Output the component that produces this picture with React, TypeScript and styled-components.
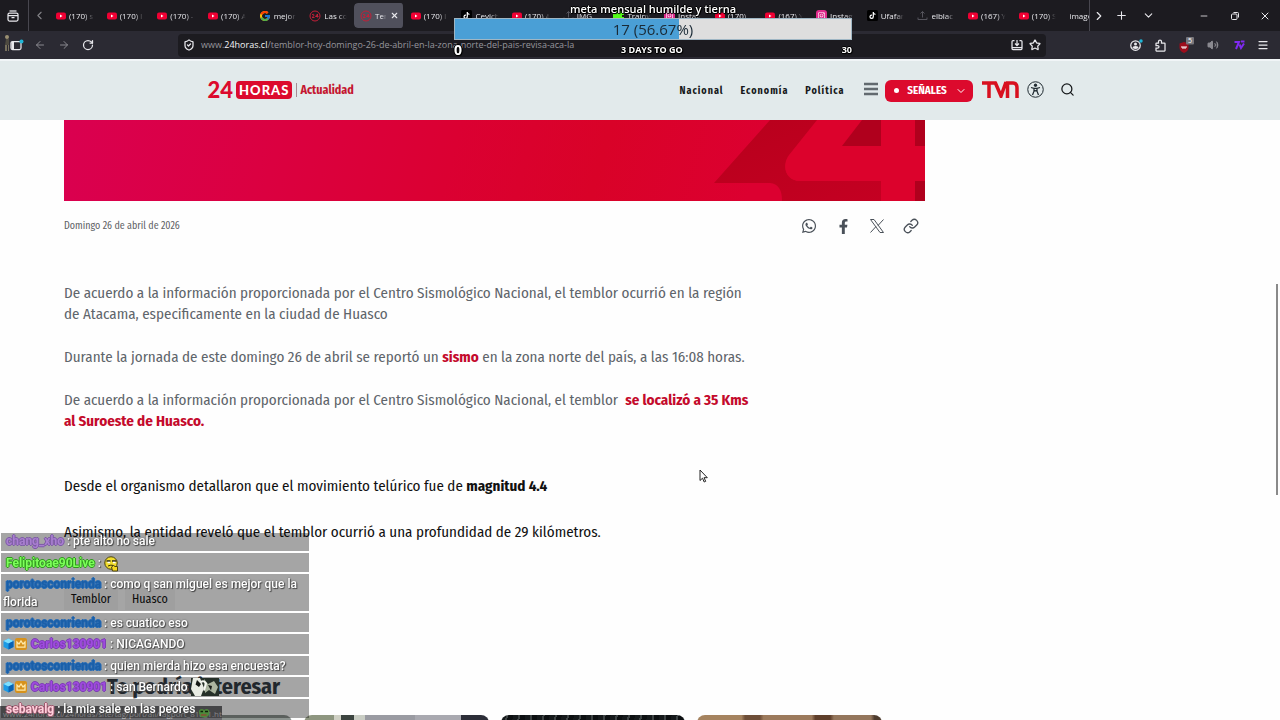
import React from "react";
import styled, { createGlobalStyle, css } from "styled-components";
import {
  ArrowLeft, ArrowRight, ChevronDown, ChevronLeft, ChevronRight, Link, Menu, Minus,
  Plus, RotateCw, Search, ShieldCheck, Star, Volume2, X,
} from "lucide-react";
import { FaFacebookF, FaInstagram, FaTiktok, FaWhatsapp } from "react-icons/fa";
import { FcGoogle } from "react-icons/fc";

const body = `"Fira Sans Condensed", "Fira Sans", Roboto, sans-serif`;
const ui = `"Open Sans", "Noto Sans", sans-serif`;
const red = "#dc0a2d";

const Global = createGlobalStyle`
  * { box-sizing: border-box; }
  body { margin: 0; background: #fefefe; font-family: ${body}; }
  p, h2, ul { margin: 0; padding: 0; }
  ul { list-style: none; }
  button { border: 0; padding: 0; background: none; font: inherit; color: inherit; }
  a { color: inherit; text-decoration: none; }
  svg { display: block; flex: none; }
`;

const Screen = styled.div`
  height: 100vh;
  overflow: hidden;
  display: flex;
  flex-direction: column;
`;

/* Browser chrome */
const TabStrip = styled.div`
  flex: none;
  height: 31px;
  display: flex;
  align-items: center;
  background: #1c1b20;
  color: #e8e8ec;
`;
const ChromeButton = styled.button<{ $w: number; $dim?: boolean }>`
  width: ${(p) => p.$w}px;
  height: 100%;
  flex: none;
  display: flex;
  align-items: center;
  justify-content: center;
  opacity: ${(p) => (p.$dim ? 0.5 : 1)};
`;
const Pinned = styled.div`
  width: 29px;
  height: 100%;
  display: flex;
  border-right: 1px solid #48474f;
`;
const Tabs = styled.div`
  flex: 1;
  min-width: 0;
  height: 100%;
  display: flex;
  align-items: center;
  overflow: hidden;
  border-right: 1px solid #48474f;
`;
const Tab = styled.button<{ $active?: boolean }>`
  flex: 0 0 calc(100% / 20.5);
  min-width: 0;
  height: 25px;
  padding: 0 4px 0 6px;
  display: flex;
  align-items: center;
  gap: 3px;
  border-radius: 4px;
  background: ${(p) => (p.$active ? "#50505c" : "none")};
  background-clip: padding-box;
  border-right: 2px solid transparent;
`;
const TabLabel = styled.span`
  flex: 1;
  min-width: 0;
  overflow: hidden;
  white-space: nowrap;
  text-align: left;
  font: 8px/12px ${ui};
  mask-image: linear-gradient(90deg, #000 60%, transparent 95%);
`;
const Toolbar = styled.div`
  flex: none;
  height: 28px;
  display: flex;
  align-items: center;
  background: #2b2a33;
  color: #e8e8ec;
`;
const NavButtons = styled.div`
  flex: none;
  width: 178px;
  height: 100%;
  display: flex;
  padding-left: 4px;
`;
const UrlBar = styled.div`
  flex: 1;
  height: 23px;
  padding: 0 5px;
  display: flex;
  align-items: center;
  gap: 6px;
  border-radius: 4px;
  background: #1c1b20;
`;
const Url = styled.div`
  flex: 1;
  font: 9px/14px ${ui};
  color: #96959c;
  b { font-weight: 400; color: #f4f4f6; }
`;
const Extensions = styled.div`
  flex: none;
  width: 234px;
  height: 100%;
  padding-left: 77px;
  display: flex;
`;
const Spacer = styled.span<{ $w: number }>`
  flex: none;
  width: ${(p) => p.$w}px;
`;

/* Site header */
const Header = styled.header`
  flex: none;
  height: 61px;
  background: #e2eaeb;
  border-top: 2px solid #f1f5f7;
  padding: 0 24px 0 26px;
`;
const HeaderInner = styled.div`
  max-width: 867px;
  height: 100%;
  margin: 0 auto;
  display: flex;
  align-items: center;
  justify-content: space-between;
`;
const Brand = styled.a`
  display: flex;
  align-items: center;
  margin-bottom: 2px;
  color: ${red};
`;
const BrandNumber = styled.span`
  font: 900 22px/18px Lato, sans-serif;
  margin-right: 3px;
`;
const BrandBadge = styled.span`
  height: 18px;
  padding: 0 3px;
  border-radius: 4px;
  background: ${red};
  color: #fff;
  font: 900 13px/18px Lato, sans-serif;
  letter-spacing: 1px;
`;
const Section = styled.span`
  margin-left: 4px;
  padding-left: 3px;
  border-left: 1px solid #a58c94;
  font: 700 12px/14px ${body};
  color: #c4162f;
`;
const Nav = styled.nav`
  display: flex;
  align-items: center;
  gap: 17px;
  font: 700 10px/16px ${body};
  letter-spacing: 1px;
  color: #15181a;
`;
const Tools = styled.div`
  display: flex;
  align-items: center;
  margin: 0 0 3px 2px;
  letter-spacing: 0;
`;
const Signals = styled.button`
  width: 88px;
  height: 22px;
  margin: 3px 9px 0 7px;
  padding: 0 5px 0 9px;
  display: flex;
  align-items: center;
  justify-content: space-between;
  border-radius: 6px;
  background: ${red};
  color: #fff;
  font: 700 11px/22px ${body};
`;
const Dot = styled.i`
  width: 5px;
  height: 5px;
  border-radius: 50%;
  background: #fff;
`;
const IconButton = styled.button<{ $left?: number }>`
  display: flex;
  margin-left: ${(p) => p.$left ?? 0}px;
`;

/* Article */
const Article = styled.main`
  flex: none;
  max-width: 925px;
  padding-left: 64px;
`;
const Hero = styled.div`
  height: 81px;
  display: flex;
  justify-content: flex-end;
  overflow: hidden;
  background: linear-gradient(105deg, #da0050 0%, #db0040 25%, #db0032 45%, #d90228 62%, #dc0030 80%);
`;
const Meta = styled.div`
  height: 50px;
  padding-right: 5px;
  display: flex;
  align-items: center;
  justify-content: space-between;
  color: #5e6266;
  font-size: 10px;
`;
const Share = styled.div`
  display: flex;
  align-items: center;
  gap: 16px;
  color: #4a5159;
`;
const ShareButton = styled.button`
  width: 18px;
  height: 18px;
  display: flex;
  align-items: center;
  justify-content: center;
`;
const Story = styled.div`
  max-width: 688px;
  padding-top: 32px;
  font-size: 15px;
  line-height: 21px;
  color: #5f656b;
`;
const Para = styled.p<{ $dark?: boolean; $top?: number }>`
  margin-top: ${(p) => p.$top ?? 22}px;
  &:first-child { margin-top: 0; }
  ${(p) => p.$dark && css`color: #111;`}
  a { color: #c40a2c; font-weight: 700; }
`;
const Tags = styled.div`
  margin-top: 45px;
  display: flex;
  gap: 7px;
`;
const Tag = styled.a`
  padding: 0 7px;
  background: #f4f4f4;
  font-size: 12px;
  line-height: 22px;
  color: #111;
`;
const Related = styled.section`
  margin-top: 65px;
  padding: 0 43px;
`;
const RelatedTitle = styled.h2`
  font: 700 22px/24px ${body};
  color: #343c46;
`;
const Cards = styled.div`
  margin-top: 16px;
  display: grid;
  grid-template-columns: repeat(4, 1fr);
  gap: 12px;
`;
const Card = styled.a<{ $bg: string }>`
  height: 104px;
  border-radius: 8px;
  overflow: hidden;
  background: ${(p) => p.$bg};
`;

/* Layers over the page */
const ScrollThumb = styled.div`
  position: fixed;
  right: 2px;
  top: 284px;
  width: 2px;
  height: 211px;
  background: #8a8a8a;
`;
const Pointer = styled.svg`
  position: fixed;
  left: 699px;
  top: 469px;
`;
const StatusBar = styled.div`
  position: fixed;
  left: 0;
  bottom: 0;
  width: 222px;
  height: 14px;
  padding-left: 3px;
  overflow: hidden;
  white-space: nowrap;
  background: #6a6a6e;
  color: #c9c9cc;
  font: 8px/15px ${ui};
`;
const Goal = styled.div`
  position: fixed;
  top: 0;
  left: calc(50% + 13px);
  width: 398px;
  transform: translateX(-50%);
  font-family: ${ui};
  color: #fff;
  text-align: center;
`;
const outline = css`
  text-shadow: 1px 0 #000, -1px 0 #000, 0 1px #000, 0 -1px #000, 1px 1px 1px #000;
`;
const GoalTitle = styled.div`
  height: 18px;
  font-size: 11px;
  font-weight: 600;
  line-height: 18px;
  ${outline}
`;
const GoalBar = styled.div`
  height: 22px;
  background: linear-gradient(90deg, #4a9fd6 56.67%, #dedede 56.67%);
  border: 1px solid #9fb6c4;
  color: #1a2a36;
  font-size: 15px;
  line-height: 20px;
`;
const GoalFoot = styled.div`
  height: 18px;
  display: flex;
  align-items: center;
  justify-content: space-between;
  font-size: 9px;
  font-weight: 700;
  ${outline}
  span:first-child { font-size: 14px; }
`;
const Chat = styled.ul`
  position: fixed;
  left: 1px;
  bottom: 2px;
  width: 308px;
  height: 185px;
  display: flex;
  flex-direction: column;
  justify-content: flex-end;
  gap: 2px;
  overflow: hidden;
  font: 500 12px/18px Roboto, sans-serif;
`;
const Message = styled.li<{ $cut?: boolean }>`
  flex: 0 1 auto;
  min-height: 0;
  ${(p) => p.$cut && css`height: 18px; display: flex; align-items: flex-end; white-space: pre;`}
  padding: 1px 2px;
  background: rgba(0, 0, 0, 0.35);
  color: #fff;
  text-shadow: 1px 1px 1px #444, 0 0 2px #555;
  svg { display: inline-block; vertical-align: -2px; margin-right: 1px; }
  svg:last-child { vertical-align: -5px; }
`;
const User = styled.b<{ $c: string; $edge: string }>`
  margin: 0 3px;
  font-weight: 700;
  color: ${(p) => p.$c};
  text-shadow: 1px 0 ${(p) => p.$edge}, -1px 0 ${(p) => p.$edge}, 0 1px ${(p) => p.$edge}, 0 -1px ${(p) => p.$edge};
`;

const YouTube = () => (
  <svg width="10" height="8" viewBox="0 0 20 16"><rect y="1" width="20" height="14" rx="4" fill="#f00033" /><path d="M8 5l5 3-5 3z" fill="#fff" /></svg>
);
const Tik = () => (
  <svg width="11" height="11" viewBox="0 0 22 22"><rect width="22" height="22" rx="3" fill="#000" /><FaTiktok x={4} y={4} size={14} color="#fff" /></svg>
);
const Insta = () => (
  <svg width="11" height="11" viewBox="0 0 22 22"><rect width="22" height="22" rx="6" fill="#e02a8c" /><path d="M0 16l10 6H6a6 6 0 0 1-6-6z" fill="#ff9a30" /><FaInstagram x={3} y={3} size={16} color="#fff" /></svg>
);
const News = () => (
  <svg width="12" height="12" viewBox="0 0 24 24" fill="none" stroke="#c21f38" strokeWidth="2">
    <circle cx="12" cy="12" r="10" /><path d="M6 9.500q3-2 4 0t-4 5.500h5M17 15V8l-4 5h6" />
  </svg>
);
const Kick = () => <svg width="11" height="11" viewBox="0 0 11 11"><path fill="#53fc18" d="M0 0h4v3h2V1h5v4H9v2h2v4H6V9H4v2H0z" /></svg>;
const Faint = () => (
  <svg width="11" height="11" viewBox="0 0 22 22" fill="none" stroke="#55545c" strokeWidth="2"><path d="M11 15V3M7 7l4-4 4 4M2 15v4h18v-4" /></svg>
);

const tabs: [React.ReactNode, string][] = [
  [<YouTube />, "(170) s"], [<YouTube />, "(170) l"], [<YouTube />, "(170) -"], [<YouTube />, "(170) A"],
  [<FcGoogle size={12} />, "mejor"], [<News />, "Las co"], [<News />, "Tem"], [<YouTube />, "(170) l"],
  [<Tik />, "Cevich"], [<YouTube />, "(170) A"], [<Faint />, "IMG_"], [<Kick />, "Trainw"],
  [<Insta />, "Instag"], [<YouTube />, "(170)"], [<YouTube />, "(167) Y"], [<Insta />, "Instag"],
  [<Tik />, "Ufafar"], [<Faint />, "elblac"], [<YouTube />, "(167) Y"], [<YouTube />, "(170) S"], [null, "image"],
];

const Badges = () => (
  <>
    <svg width="11" height="12" viewBox="0 0 22 24"><path d="M11 1l10 5v12l-10 5L1 18V6z" fill="#1c9be6" /><path d="M11 1l10 5-10 5L1 6z" fill="#7fe0ff" /><path d="M11 11l10-5v12l-10 5z" fill="#0a62b4" /></svg>
    <svg width="12" height="12" viewBox="0 0 24 24"><rect width="24" height="24" rx="4" fill="#d7921c" /><path d="M4 18V8l4 4 4-6 4 6 4-4v10z" fill="none" stroke="#ffe9a8" strokeWidth="2.500" /></svg>
  </>
);
const Smirk = () => (
  <svg width="15" height="16" viewBox="0 0 30 32">
    <circle cx="14" cy="14" r="12.500" fill="#f0dc2c" stroke="#4a4210" strokeWidth="2" />
    <path d="M5 10h8M16 10h9" stroke="#222" strokeWidth="3" /><path d="M7 13h5M18 13h5" stroke="#fff" strokeWidth="3" />
    <path d="M8 20q6-3 11-1" fill="none" stroke="#332b08" strokeWidth="2" />
    <path d="M15 22l4-3 3 2h5v9H17z" fill="#f5d820" stroke="#4a4210" strokeWidth="2" />
  </svg>
);
const Cow = () => (
  <svg width="28" height="18" viewBox="0 0 56 36">
    <rect width="56" height="36" fill="#263029" /><path d="M4 0h14l8 20-6 16H8L0 22z" fill="#e9ece4" />
    <path d="M26 2l8 10 12-6 8 12-6 14-12-8-8 6z" fill="#aab49f" /><path d="M12 4l8 8-4 6-7-5zM34 14l8 2-2 9z" fill="#161a17" />
    <path d="M20 8q6-4 10 3l-4 14" fill="none" stroke="#f6f7f2" strokeWidth="4" />
  </svg>
);
const Frog = () => (
  <svg width="12" height="10" viewBox="0 0 24 20"><path d="M2 8q0-6 6-6 4 0 4 3 1-3 5-3 6 0 6 7-1 10-11 10T2 8z" fill="#4d8a3a" /><path d="M5 7h5M14 7h6" stroke="#10210c" strokeWidth="3" /><path d="M6 14h11" stroke="#8c4a36" strokeWidth="3" /></svg>
);
const Mascot = () => (
  <svg width="6" height="22" viewBox="0 0 6 22"><circle cx="3" cy="6" r="2" fill="#9a8f72" /><path d="M2 8h3v6H1z" fill="#4e4a40" /><path d="M1 14h2v6H1zM4 14h1v6H4z" fill="#77705c" /></svg>
);
const Arts = () => (
  <svg width="285" height="81" viewBox="640 120 285 81" preserveAspectRatio="xMaxYMin slice">
    <defs>
      <linearGradient id="shade" x1="0" x2="1" y1="0" y2="1"><stop offset="0" stopColor="#b8001c" /><stop offset="1" stopColor="#c40022" /></linearGradient>
    </defs>
    <path d="M770 120L714 183h56q12 1 12 18h99v-20h-81c-14 0-19-16-10-26l29-35z" fill="url(#shade)" />
    <path d="M817 120l-28 35c-8 11-3 26 11 26h81v20h34v-20h10v-35h-10v-26h-34v26h-39l20-26z" fill="#dc022c" />
    <path d="M862 120l-20 26h39v-26zM915 120h10v26h-10zM915 181h10v20h-10z" fill="#b0001d" />
  </svg>
);

export default function App() {
  return (
    <Screen>
      <Global />
      <TabStrip>
        <Pinned>
          <ChromeButton $w={26} aria-label="Recent browsing">
            <svg width="12" height="12" viewBox="0 0 24 24" fill="none" stroke="currentColor" strokeWidth="2.500"><path d="M5 2h14" /><rect x="2" y="6" width="20" height="16" rx="3" /><path d="M2 11h20M9 15h6" /></svg>
          </ChromeButton>
        </Pinned>
        <ChromeButton $w={21} $dim aria-label="Scroll left"><ChevronLeft size={13} /></ChromeButton>
        <Tabs>
          {tabs.map(([icon, label], i) => (
            <Tab key={i} $active={i === 6}>
              {icon}
              <TabLabel>{label}</TabLabel>
              {i === 6 && <X size={9} strokeWidth={3} />}
            </Tab>
          ))}
        </Tabs>
        <ChromeButton $w={18} aria-label="Scroll right"><ChevronRight size={14} /></ChromeButton>
        <ChromeButton $w={27} aria-label="New tab"><Plus size={13} /></ChromeButton>
        <ChromeButton $w={27} aria-label="List tabs"><ChevronDown size={13} /></ChromeButton>
        <Spacer $w={34} />
        <ChromeButton $w={15} aria-label="Minimize"><Minus size={10} /></ChromeButton>
        <ChromeButton $w={47} aria-label="Restore">
          <svg width="8" height="8" viewBox="0 0 16 16" fill="none" stroke="currentColor" strokeWidth="2"><rect x="1" y="4" width="11" height="11" rx="2" /><path d="M5 1h8q2 0 2 2v8" /></svg>
        </ChromeButton>
        <ChromeButton $w={13} aria-label="Close"><X size={12} /></ChromeButton>
        <Spacer $w={9} />
      </TabStrip>
      <Toolbar>
        <NavButtons>
          <Mascot />
          <ChromeButton $w={14} aria-label="Sidebar">
            <svg width="14" height="12" viewBox="0 0 28 24"><rect x="2" y="5" width="20" height="16" rx="3" fill="none" stroke="#e8e8ec" strokeWidth="2.500" /><path d="M3 6h5v14H3z" fill="#e8e8ec" /><circle cx="23" cy="5" r="4" fill="#1fb6d8" /></svg>
          </ChromeButton>
          <Spacer $w={4} />
          <ChromeButton $w={24} $dim aria-label="Back"><ArrowLeft size={12} /></ChromeButton>
          <ChromeButton $w={24} $dim aria-label="Forward"><ArrowRight size={12} /></ChromeButton>
          <ChromeButton $w={24} aria-label="Reload"><RotateCw size={12} strokeWidth={2.500} /></ChromeButton>
        </NavButtons>
        <UrlBar>
          <ShieldCheck size={12} strokeWidth={2.500} />
          <Url>www.<b>24horas.cl</b>/temblor-hoy-domingo-26-de-abril-en-la-zona-norte-del-pais-revisa-aca-la</Url>
          <svg width="12" height="12" viewBox="0 0 24 24" fill="none" stroke="currentColor" strokeWidth="2.500"><path d="M7 3H4q-2 0-2 2v14q0 2 2 2h16q2 0 2-2V5q0-2-2-2h-3M2 17h20M12 2v10M8 9l4 4 4-4" /></svg>
          <Star size={12} strokeWidth={2.500} />
        </UrlBar>
        <Extensions>
          <ChromeButton $w={26} aria-label="Account">
            <svg width="13" height="12" viewBox="0 0 26 24"><circle cx="11" cy="13" r="9.500" fill="none" stroke="#e8e8ec" strokeWidth="2.500" /><circle cx="11" cy="10" r="3" fill="#e8e8ec" /><path d="M5 18q0-4 6-4t6 4q-6 4-12 0z" fill="#e8e8ec" /><circle cx="22" cy="4" r="3.500" fill="#1fb6d8" /></svg>
          </ChromeButton>
          <ChromeButton $w={23} aria-label="Extensions">
            <svg width="11" height="13" viewBox="0 0 22 26" fill="none" stroke="currentColor" strokeWidth="2.500"><path d="M7 8V5q0-3 3-3t3 3v3h6q1 0 1 1v14q0 1-1 1H3q-1 0-1-1v-5h3q3 0 3-2.500T5 13H2V9q0-1 1-1z" /></svg>
          </ChromeButton>
          <ChromeButton $w={28} aria-label="Blocker">
            <svg width="16" height="18" viewBox="0 0 32 36"><path d="M12 12l9 3v8q0 7-9 11-9-4-9-11v-8z" fill="#9c0d1c" /><path d="M8 20v4h4v-4M12 24h4v-4" fill="none" stroke="#fff" strokeWidth="2" /><rect x="16" y="2" width="16" height="15" rx="2" fill="#77767c" /><text x="20" y="14" fontSize="14" fill="#fff" fontFamily="Open Sans">5</text></svg>
          </ChromeButton>
          <ChromeButton $w={26} $dim aria-label="Volume"><Volume2 size={12} fill="currentColor" /></ChromeButton>
          <ChromeButton $w={26} aria-label="7TV">
            <svg width="11" height="10" viewBox="0 0 22 20" fill="none" stroke="#7f2af0" strokeWidth="4"><path d="M1 4h9L4 18M11 9l3 7 6-9M14 3h7" /></svg>
          </ChromeButton>
          <ChromeButton $w={22} aria-label="Menu"><Menu size={12} strokeWidth={2.500} /></ChromeButton>
        </Extensions>
      </Toolbar>

      <Header>
        <HeaderInner>
          <Brand href="#">
            <BrandNumber>24</BrandNumber>
            <BrandBadge>HORAS</BrandBadge>
            <Section>Actualidad</Section>
          </Brand>
          <Nav>
            <a href="#nacional">Nacional</a>
            <a href="#economia">Economía</a>
            <a href="#politica">Política</a>
            <Tools>
              <IconButton aria-label="Menú">
                <svg width="14" height="14" viewBox="0 0 14 14" stroke="#626a6f" strokeWidth="2.500"><path d="M0 2h14M0 7h14M0 12h14" /></svg>
              </IconButton>
              <Signals><Dot />SEÑALES<ChevronDown size={12} /></Signals>
              <svg width="37" height="17" viewBox="0 0 37 17" fill="none" stroke="#d8101f" strokeWidth="3.500"><path d="M0 2h14M7 2v15M13 1l6 14 5-14M25.500 17V2H31q4 0 4 5v10" /></svg>
              <IconButton $left={8} aria-label="Accesibilidad">
                <svg width="17" height="17" viewBox="0 0 34 34" fill="none" stroke="#1f2a30" strokeWidth="2"><circle cx="17" cy="17" r="15.500" /><circle cx="17" cy="8.500" r="2.500" fill="#1f2a30" /><path d="M8 13l6 1.500h6L26 13M14 14.500v6L11 28M20 14.500v6L23 28M14 20.500l3-1 3 1" strokeWidth="2.500" /></svg>
              </IconButton>
              <IconButton $left={16} aria-label="Buscar"><Search size={15} /></IconButton>
            </Tools>
          </Nav>
        </HeaderInner>
      </Header>

      <Article>
        <Hero><Arts /></Hero>
        <Meta>
          <span>Domingo 26 de abril de 2026</span>
          <Share>
            <ShareButton aria-label="WhatsApp"><FaWhatsapp size={16} /></ShareButton>
            <ShareButton aria-label="Facebook"><FaFacebookF size={15} /></ShareButton>
            <ShareButton aria-label="X">
              <svg width="16" height="16" viewBox="0 0 32 32" fill="none" stroke="currentColor" strokeWidth="2"><path d="M3 3h7l19 26h-7zM29 3L18 15M3 29l11-12" /></svg>
            </ShareButton>
            <ShareButton aria-label="Copiar enlace"><Link size={16} /></ShareButton>
          </Share>
        </Meta>
        <Story>
          <Para>De acuerdo a la información proporcionada por el Centro Sismológico Nacional, el temblor ocurrió en la región de Atacama, especificamente en la ciudad de Huasco</Para>
          <Para>Durante la jornada de este domingo 26 de abril se reportó un <a href="#sismo">sismo</a> en la zona norte del país, a las 16:08 horas.</Para>
          <Para>De acuerdo a la información proporcionada por el Centro Sismológico Nacional, el temblor&nbsp; <a href="#huasco">se localizó a 35 Kms al Suroeste de Huasco.</a></Para>
          <Para $dark $top={44}>Desde el organismo detallaron que el movimiento telúrico fue de <b>magnitud 4.4</b></Para>
          <Para $dark $top={25}>Asimismo, la entidad reveló que el temblor ocurrió a una profundidad de 29 kilómetros.</Para>
        </Story>
        <Tags><Tag href="#temblor">Temblor</Tag><Tag href="#ciudad">Huasco</Tag></Tags>
        <Related>
          <RelatedTitle>Te podría interesar</RelatedTitle>
          <Cards>
            <Card href="#1" $bg="#8d9490" />
            <Card href="#2" $bg="linear-gradient(90deg, #8e9680 0 16%, #cfd0c4 16% 20%, #3c4440 20% 27%, #c9cdc4 27% 33%, #9a9ba2 33% 60%, #a9a9b0 60% 85%, #2c2e38 85%)" />
            <Card href="#3" $bg="repeating-linear-gradient(100deg, #15191b 0 5px, #3c4243 5px 7px, #0c0f11 7px 12px)" />
            <Card href="#4" $bg="linear-gradient(90deg, #a5835f 0 24%, #6e4e38 26% 34%, #9c7a5c 36% 62%, #5f3f2b 64% 72%, #94765c 74% 94%, #4e3c2e 96%)" />
          </Cards>
        </Related>
      </Article>

      <ScrollThumb />
      <Pointer width="9" height="14" viewBox="0 0 9 14"><path d="M1 1v10.500l2.500-2.300 1.700 3.800 1.500-.7L5 8.700h3.300z" fill="#fff" stroke="#222" /></Pointer>
      <StatusBar>www.24horas.cl/24horas/site/tag/port/all/tagport_818_1.html</StatusBar>

      <Chat>
        <Message $cut><User $c="#a97fd0" $edge="#7d5aa6">chang_xho</User>: pte alto no sale</Message>
        <Message><User $c="#7dff5a" $edge="#2f9a1c">Felipitoae90Live</User>: <Smirk /></Message>
        <Message><User $c="#1a5fa8" $edge="#2a6db5">porotosconrienda</User>: como q san miguel es mejor que la florida</Message>
        <Message><User $c="#1a5fa8" $edge="#2a6db5">porotosconrienda</User>: es cuatico eso</Message>
        <Message><Badges /><User $c="#a04be0" $edge="#7c3db4">Carlos130901</User>: NICAGANDO</Message>
        <Message><User $c="#1a5fa8" $edge="#2a6db5">porotosconrienda</User>: quien mierda hizo esa encuesta?</Message>
        <Message><Badges /><User $c="#a04be0" $edge="#7c3db4">Carlos130901</User>: san Bernardo <Cow /></Message>
        <Message><User $c="#ffd0dc" $edge="#a05a70">sebavalg</User>: la mia sale en las peores <Frog /></Message>
      </Chat>

      <Goal>
        <GoalTitle>meta mensual humilde y tierna</GoalTitle>
        <GoalBar>17 (56.67%)</GoalBar>
        <GoalFoot><span>0</span><span>3 DAYS TO GO</span><span>30</span></GoalFoot>
      </Goal>
    </Screen>
  );
}
